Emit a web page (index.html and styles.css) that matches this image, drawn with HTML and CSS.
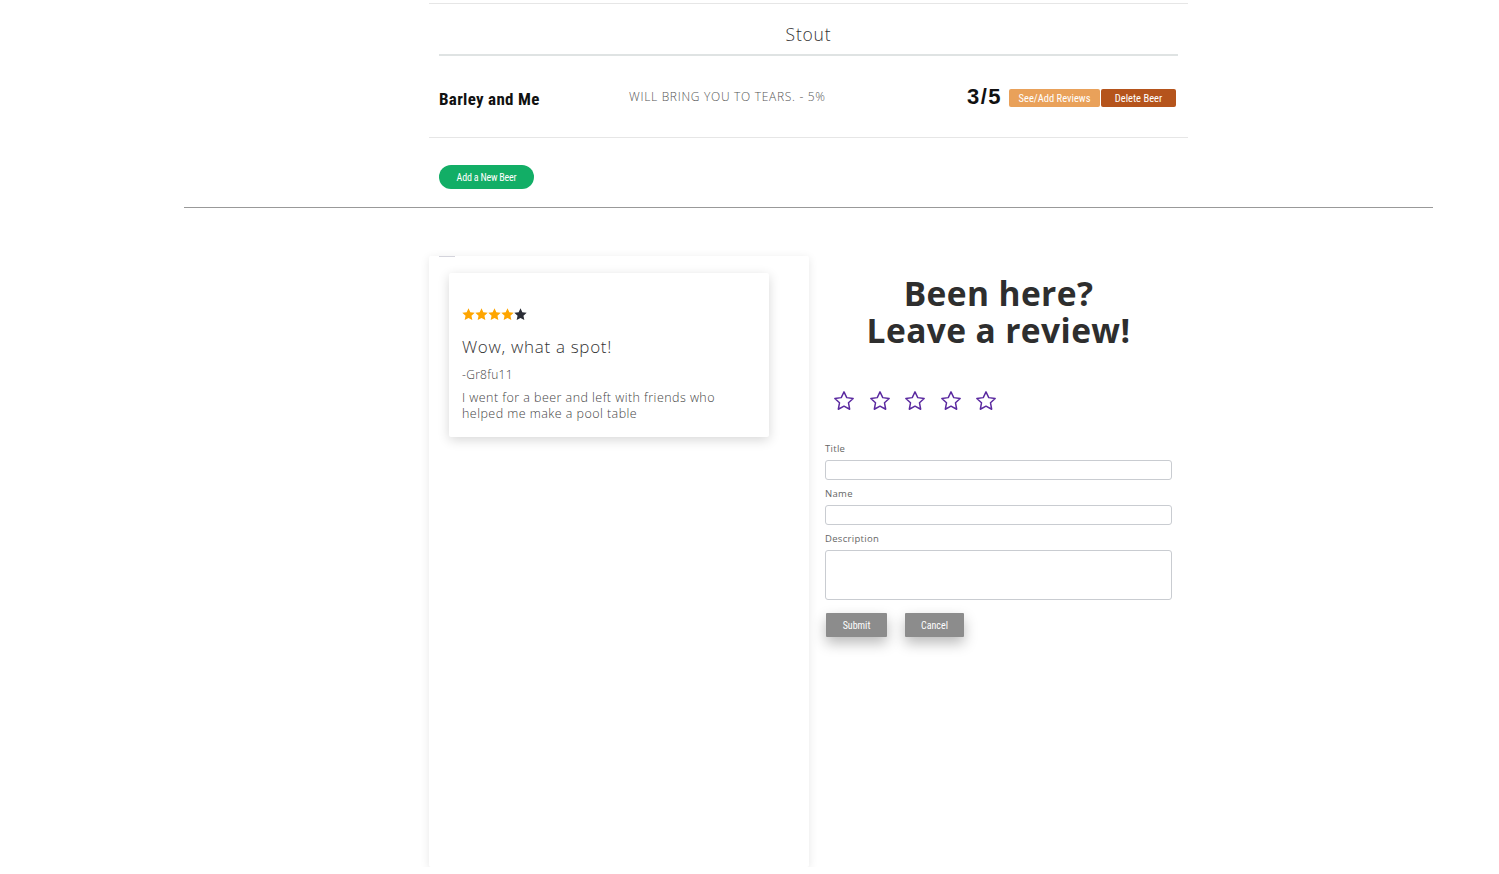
FILE: index.html
```html
<!DOCTYPE html>
<html>
<head>
<meta charset="utf-8">
<title>Beers</title>
<link rel="stylesheet" href="styles.css">
</head>
<body>
<div class="beer-list">
  <div class="style-title">Stout</div>
  <div class="beer-row">
    <div class="beer-name">Barley and Me</div>
    <div class="beer-desc">WILL BRING YOU TO TEARS. - 5%</div>
    <div class="beer-actions">
      <span class="beer-rating">3/5</span>
      <button class="btn btn-see">See/Add Reviews</button>
      <button class="btn btn-delete">Delete Beer</button>
    </div>
  </div>
  <div class="add-area">
    <button class="btn-add">Add a New Beer</button>
  </div>
</div>
<div class="divider"></div>
<div class="review-section">
  <div class="review-list">
    <div class="tab"></div>
    <div class="review-card">
      <div class="mini-stars">
        <svg viewBox="1 1 22 22" class="ms on"><polygon points="12,1.5 15.1,8 22.5,8.9 17,14 18.5,21.5 12,17.8 5.5,21.5 7,14 1.5,8.9 8.9,8"/></svg>
        <svg viewBox="1 1 22 22" class="ms on"><polygon points="12,1.5 15.1,8 22.5,8.9 17,14 18.5,21.5 12,17.8 5.5,21.5 7,14 1.5,8.9 8.9,8"/></svg>
        <svg viewBox="1 1 22 22" class="ms on"><polygon points="12,1.5 15.1,8 22.5,8.9 17,14 18.5,21.5 12,17.8 5.5,21.5 7,14 1.5,8.9 8.9,8"/></svg>
        <svg viewBox="1 1 22 22" class="ms on"><polygon points="12,1.5 15.1,8 22.5,8.9 17,14 18.5,21.5 12,17.8 5.5,21.5 7,14 1.5,8.9 8.9,8"/></svg>
        <svg viewBox="1 1 22 22" class="ms off"><polygon points="12,1.5 15.1,8 22.5,8.9 17,14 18.5,21.5 12,17.8 5.5,21.5 7,14 1.5,8.9 8.9,8"/></svg>
      </div>
      <div class="review-title">Wow, what a spot!</div>
      <div class="review-author">-Gr8fu11</div>
      <div class="review-text">I went for a beer and left with friends who helped me make a pool table</div>
    </div>
  </div>
  <div class="review-form">
    <h2 class="form-heading"><span class="hl">Been here?</span><span class="hl">Leave a review!</span></h2>
    <div class="rate-stars">
      <svg viewBox="0 0 24 24" class="rs"><polygon points="12,2 15,8.3 22,9.2 16.9,14 18.2,21 12,17.6 5.8,21 7.1,14 2,9.2 9,8.3"/></svg>
      <svg viewBox="0 0 24 24" class="rs"><polygon points="12,2 15,8.3 22,9.2 16.9,14 18.2,21 12,17.6 5.8,21 7.1,14 2,9.2 9,8.3"/></svg>
      <svg viewBox="0 0 24 24" class="rs"><polygon points="12,2 15,8.3 22,9.2 16.9,14 18.2,21 12,17.6 5.8,21 7.1,14 2,9.2 9,8.3"/></svg>
      <svg viewBox="0 0 24 24" class="rs"><polygon points="12,2 15,8.3 22,9.2 16.9,14 18.2,21 12,17.6 5.8,21 7.1,14 2,9.2 9,8.3"/></svg>
      <svg viewBox="0 0 24 24" class="rs"><polygon points="12,2 15,8.3 22,9.2 16.9,14 18.2,21 12,17.6 5.8,21 7.1,14 2,9.2 9,8.3"/></svg>
    </div>
    <label class="field-label first">Title</label>
    <input class="field-input" type="text">
    <label class="field-label">Name</label>
    <input class="field-input" type="text">
    <label class="field-label">Description</label>
    <textarea class="field-area"></textarea>
    <div class="form-buttons">
      <button class="btn-gray">Submit</button>
      <button class="btn-gray btn-cancel">Cancel</button>
    </div>
  </div>
</div>
</body>
</html>
```

FILE: styles.css
```css
* { box-sizing: border-box; }
body {
  margin: 0;
  font-family: "Open Sans", "DejaVu Sans", sans-serif;
  color: #333;
  background: #fff;
}
.beer-list {
  width: 759px;
  margin: 3px 0 0 429px;
  border-top: 1px solid #e6e6e6;
}
.style-title {
  margin: 0 10px;
  height: 52px;
  padding-top: 18px;
  text-align: center;
  font-size: 17.5px;
  font-weight: 300;
  letter-spacing: 0.8px;
  color: #333;
  border-bottom: 2px solid #dfe3e3;
}
.beer-row {
  display: flex;
  align-items: center;
  height: 82px;
  padding: 0 12px 0 10px;
  border-bottom: 1px solid #e6e6e6;
}
.beer-name {
  width: 190px;
  font-family: "Liberation Sans Narrow", "Roboto Condensed", "Liberation Sans", sans-serif;
  font-weight: bold;
  font-size: 17px;
  letter-spacing: 0.3px;
  color: #111;
  padding-top: 4px;
}
.beer-desc {
  flex: 1;
  font-size: 12px;
  font-weight: 300;
  color: #555;
  letter-spacing: 0.7px;
}
.beer-actions {
  display: flex;
  align-items: center;
}
.beer-rating {
  font-family: "Liberation Sans", sans-serif;
  font-weight: bold;
  font-size: 22px;
  color: #111;
  margin-right: 7px;
  letter-spacing: 1.5px;
}
.btn {
  border: none;
  height: 18px;
  padding: 0 6px;
  font-family: "Liberation Sans Narrow", "Roboto Condensed", "Liberation Sans", sans-serif;
  font-size: 10.5px;
  color: #fff;
  border-radius: 2px;
  margin-top: 3px;
}
.btn-see { background: #e9a15a; width: 91px; margin-right: 1px; }
.btn-delete { background: #b5541c; width: 75px; }
.add-area {
  height: 69px;
  padding: 27px 0 0 10px;
}
.btn-add {
  display: block;
  width: 95px;
  height: 24px;
  border: none;
  border-radius: 12px;
  background: #12ae66;
  color: #fff;
  font-family: "Liberation Sans Narrow", "Roboto Condensed", "Liberation Sans", sans-serif;
  font-size: 10px;
  letter-spacing: -0.2px;
}
.divider {
  margin-left: 184px;
  width: 1249px;
  height: 1px;
  background: #999;
}
.review-section {
  display: flex;
  align-items: flex-start;
  margin: 48px 0 0 429px;
}
.review-list {
  width: 380px;
  height: 611px;
  background: #fff;
  border-radius: 2px;
  box-shadow: 0 2px 10px rgba(0,0,0,0.10);
}
.tab {
  width: 16px;
  height: 1px;
  margin-left: 10px;
  background: #d4d4dc;
}
.review-card {
  margin: 16px 0 0 20px;
  width: 320px;
  height: 164px;
  background: #fff;
  border-radius: 2px;
  box-shadow: 0 3px 12px rgba(0,0,0,0.16);
  padding: 35px 13px 0 13px;
}
.mini-stars {
  display: flex;
  height: 14px;
}
.ms { width: 13px; height: 13px; }
.ms.on { fill: #fea500; }
.ms.off { fill: #2b2d36; }
.review-title {
  margin-top: 13px;
  font-size: 17px;
  font-weight: 300;
  color: #333;
  letter-spacing: 0.7px;
}
.review-author {
  margin-top: 8px;
  font-size: 12px;
  font-weight: 300;
  color: #444;
  letter-spacing: 0.3px;
}
.review-text {
  margin-top: 7px;
  font-size: 12.5px;
  line-height: 16px;
  font-weight: 300;
  color: #444;
  letter-spacing: 0.45px;
  padding-right: 20px;
}
.review-form {
  width: 347px;
  margin-left: 16px;
  padding-top: 19px;
}
.form-heading {
  margin: 0;
  text-align: center;
  font-size: 33.5px;
  line-height: 37px;
  font-weight: 700;
  letter-spacing: 0.4px;
  color: #2e2e2e;
}
.hl {
  display: block;
  height: 37px;
}
.rate-stars {
  display: flex;
  gap: 13.5px;
  margin: 41px 0 0 8px;
  height: 22px;
}
.rs {
  width: 22px;
  height: 22px;
  fill: none;
  stroke: #5b2aa0;
  stroke-width: 1.6;
  stroke-linejoin: round;
}
.field-label {
  display: block;
  margin-top: 8px;
  font-size: 9.5px;
  color: #666;
  line-height: 12px;
  height: 12px;
  letter-spacing: 0.3px;
}
.field-label.first { margin-top: 31px; }
.field-input {
  display: block;
  width: 347px;
  height: 20px;
  margin-top: 5px;
  border: 1px solid #c9ccd1;
  border-radius: 3px;
}
.field-area {
  display: block;
  width: 347px;
  height: 50px;
  margin-top: 5px;
  border: 1px solid #c9ccd1;
  border-radius: 3px;
  resize: none;
}
.form-buttons {
  display: flex;
  gap: 18px;
  margin: 13px 0 0 1px;
}
.btn-gray {
  width: 61px;
  height: 24px;
  border: none;
  border-radius: 1px;
  background: #8c8c8c;
  color: #fff;
  font-family: "Liberation Sans Narrow", "Roboto Condensed", "Liberation Sans", sans-serif;
  font-size: 10px;
  box-shadow: 0 6px 14px rgba(0,0,0,0.28);
}
.btn-cancel { width: 59px; }
```
